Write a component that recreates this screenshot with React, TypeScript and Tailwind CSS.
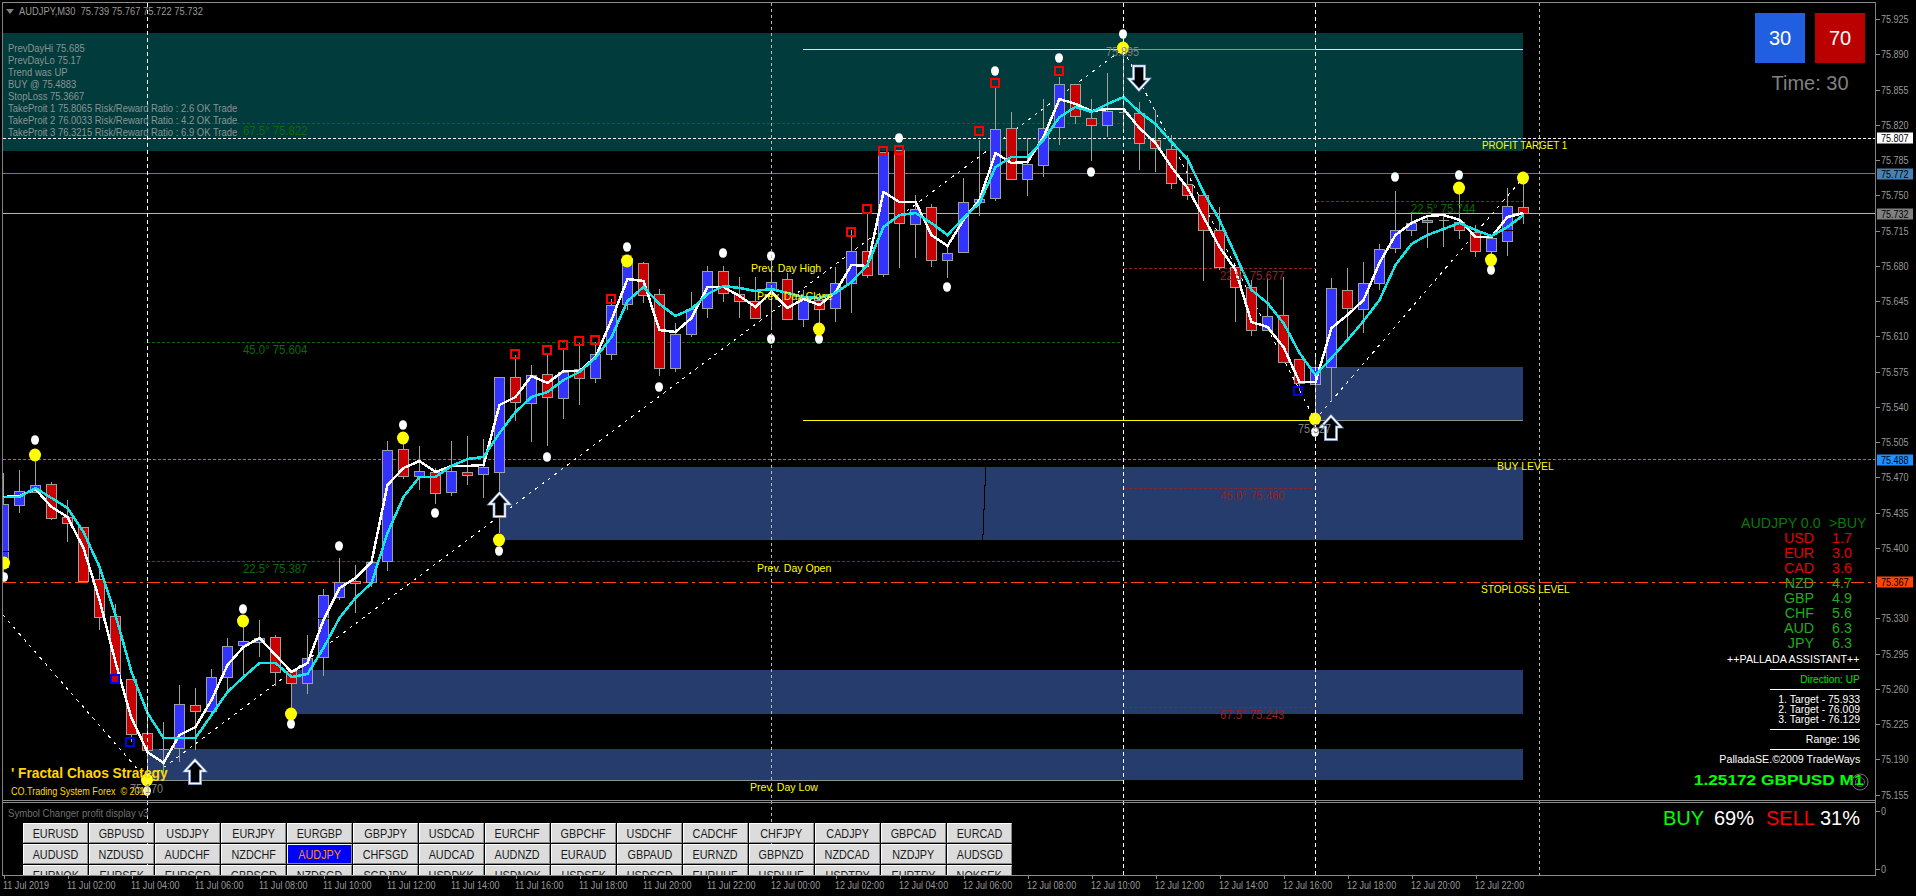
import React from "react";

const X = (k: number) => 3.5 + 16 * k;

type C = [string, number, number, number, number];
const candles: C[] = [
  ["b",504,567,473,580],["b",491,505,470,513],["b",485,492,460,492],["r",484,518,482,520],["r",517,523,500,542],
  ["r",527,581,527,581],["r",579,617,563,630],["r",616,683,604,683],["r",679,734,679,742],["r",733,750,700,790],
  ["d",749,749,722,773],["b",704,748,685,762],["r",705,711,688,750],["b",677,711,669,717],["b",646,677,638,692],
  ["b",641,645,615,678],["b",638,642,620,657],["r",637,672,635,686],["r",671,683,671,710],["b",658,683,635,694],
  ["b",595,657,589,676],["b",582,597,558,600],["r",581,583,565,613],["b",562,582,559,587],["b",450,561,441,571],
  ["r",449,476,443,479],["b",471,476,446,490],["r",472,493,468,504],["b",471,492,441,496],["r",472,475,436,485],
  ["b",467,474,439,498],["b",377,472,377,533],["r",377,402,355,421],["b",375,403,365,442],["r",374,397,355,446],
  ["b",372,398,350,419],["r",369,378,343,405],["b",354,378,342,383],["b",305,354,299,360],["b",258,304,255,310],
  ["r",263,295,262,303],["r",294,368,289,376],["b",334,368,323,372],["b",309,334,292,337],["b",271,308,266,318],
  ["r",271,293,266,302],["r",294,301,277,318],["r",301,318,277,318],["b",282,290,263,328],["r",279,319,273,319],
  ["b",298,319,290,327],["r",300,309,293,323],["b",283,308,267,322],["b",251,283,230,313],["r",251,275,214,278],
  ["b",152,274,152,277],["r",150,223,150,268],["b",209,224,195,258],["r",207,260,204,267],["b",253,260,245,278],
  ["b",202,252,178,252],["b",199,202,140,216],["b",129,198,88,201],["r",128,179,112,179],["b",164,179,138,196],
  ["b",128,165,99,177],["b",84,127,77,145],["r",84,116,84,124],["r",118,125,99,161],["b",111,125,73,137],
  ["d",112,112,50,133],["r",113,143,102,170],["r",140,148,110,172],["r",149,183,135,189],["r",184,195,155,200],
  ["r",195,230,195,281],["r",230,267,207,270],["r",267,287,267,322],["r",287,330,280,336],["b",316,330,278,330],
  ["r",315,362,277,362],["r",359,383,359,391],["b",367,384,357,420],["b",288,367,278,402],["r",290,308,268,338],
  ["b",283,309,262,333],["b",249,283,244,290],["b",230,248,191,253],["b",223,230,212,236],["b",220,222,215,248],
  ["d",220,220,215,247],["r",222,230,192,239],["r",232,251,225,257],["b",238,251,238,255],["b",206,241,188,256],
  ["r",207,213,183,224],
];

const whiteMA = [497,496,489,507,517,548,600,662,718,752,763,735,727,700,665,647,638,655,672,663,620,588,578,562,485,468,461,472,466,466,465,405,397,376,383,371,371,357,320,279,281,330,332,318,287,287,296,307,292,308,299,305,292,265,266,192,202,202,235,246,220,200,153,163,162,137,99,104,111,109,109,128,143,167,188,217,247,270,322,327,347,382,382,328,315,300,263,235,223,216,215,220,237,237,217,213];
const cyanMA = [497,497,488,498,508,532,567,615,672,713,738,738,738,715,692,677,663,663,677,674,648,618,598,583,533,497,477,477,466,459,457,433,412,397,392,380,372,358,337,301,287,304,316,309,294,286,288,291,289,293,297,298,293,282,265,227,215,213,223,235,218,203,167,157,157,140,117,107,112,104,97,112,124,142,159,192,220,255,290,303,323,353,375,358,340,321,300,265,244,235,229,223,230,236,227,215];
const pts = (a: number[]) => a.map((y, k) => `${X(k)},${y}`).join(" ");

const yellowDots = [[4,563],[35,455],[147,780],[243,621],[291,714],[403,438],[499,540],[627,261],[819,329],[1123,48],[1315,419],[1459,188],[1491,260],[1523,178]];
const whiteDots = [[4,577],[35,440],[147,791],[243,609],[291,724],[339,546],[403,425],[435,513],[499,551],[547,457],[627,247],[659,387],[723,253],[771,256],[771,339],[819,339],[899,138],[947,287],[995,71],[1059,58],[1091,172],[1123,34],[1315,432],[1395,177],[1459,175],[1491,270]];
const redSquares = [[515,354],[547,350],[563,345],[579,341],[595,340],[611,299],[627,260],[851,232],[867,209],[883,151],[899,150],[979,131],[995,83],[1059,71]];
const blueSquares = [[115,679],[130,742],[1298,391]];

const upArrows = [[195,759],[499.5,492],[1331,415]];

const zones = [
  [1316,367,207,53],
  [500,467,1023,73],
  [292,670,1231,44],
  [147,749,1376,31],
];

const info = [
  "PrevDayHi 75.685",
  "PrevDayLo 75.17",
  "Trend was UP",
  "BUY @ 75.4883",
  "StopLoss 75.3667",
  "TakeProit 1 75.8065 Risk/Reward Ratio : 2.6 OK Trade",
  "TakeProit 2 76.0033 Risk/Reward Ratio : 4.2 OK Trade",
  "TakeProit 3 76.3215 Risk/Reward Ratio : 6.9 OK Trade",
];

type L = { t: string; x: number; y: number; c: string };
const labels: L[] = [
  { t: "AUDJPY,M30\u00a0\u00a075.739 75.767 75.722 75.732", x: 19, y: 11, c: "text-[11px] scale-x-[.85] text-[#999999]" },
  ...info.map((t, i) => ({ t, x: 7.5, y: 47.7 + 12 * i, c: "text-[11px] scale-x-[.86] text-[#8a9494]" })),
  { t: "67.5° 75.822", x: 242.5, y: 130, c: "text-[13px] scale-x-[.87] text-[#0a6a0a]" },
  { t: "45.0° 75.604", x: 242.5, y: 349, c: "text-[13px] scale-x-[.87] text-[#0a6a0a]" },
  { t: "22.5° 75.387", x: 242.5, y: 568, c: "text-[13px] scale-x-[.87] text-[#0a6a0a]" },
  { t: "22.5° 75.744", x: 1411, y: 208, c: "text-[13px] scale-x-[.87] text-[#0a6a0a]" },
  { t: "22.5° 75.677", x: 1219.5, y: 275, c: "text-[13px] scale-x-[.87] text-[#952020]" },
  { t: "45.0° 75.460", x: 1219.5, y: 495, c: "text-[13px] scale-x-[.87] text-[#952020]" },
  { t: "67.5° 75.243", x: 1219.5, y: 714, c: "text-[13px] scale-x-[.87] text-[#952020]" },
  { t: "Prev. Day High", x: 751, y: 268, c: "text-[11px] scale-x-[.96] text-[#ffff00]" },
  { t: "Prev. Day Close", x: 757, y: 296, c: "text-[11px] scale-x-[.96] text-[#ffff00]" },
  { t: "Prev. Day Open", x: 757, y: 568, c: "text-[11px] scale-x-[.96] text-[#ffff00]" },
  { t: "Prev. Day Low", x: 750, y: 787, c: "text-[11px] scale-x-[.96] text-[#ffff00]" },
  { t: "PROFIT TARGET 1", x: 1481.5, y: 145, c: "text-[11px] scale-x-[.89] text-[#ffff00]" },
  { t: "BUY LEVEL", x: 1496.5, y: 466, c: "text-[11px] scale-x-[.95] text-[#ffff00]" },
  { t: "STOPLOSS LEVEL", x: 1481, y: 589, c: "text-[11px] scale-x-[.92] text-[#ffff00]" },
  { t: "75.895", x: 1106, y: 52, c: "text-[12px] scale-x-[.9] text-[#808080]" },
  { t: "75.527", x: 1298, y: 429, c: "text-[12px] scale-x-[.9] text-[#808080]" },
  { t: "75.170", x: 130, y: 789, c: "text-[12px] scale-x-[.9] text-[#808080]" },
  { t: "' Fractal Chaos Strategy", x: 10.5, y: 772.5, c: "text-[14px] font-bold scale-x-[.98] text-[#ffd700]" },
  { t: "CO.Trading System Forex\u00a0\u00a0©\u00a02019", x: 10.5, y: 791, c: "text-[11px] scale-x-[.82] text-[#ffd700]" },
];

const prices = ["75.925","75.890","75.855","75.820","75.785","75.750","75.715","75.680","75.645","75.610","75.575","75.540","75.505","75.470","75.435","75.400","75.365","75.330","75.295","75.260","75.225","75.190","75.155"];

const badges = [
  { t: "75.807", y: 138, c: "bg-white text-black" },
  { t: "75.772", y: 173.5, c: "bg-[#4682b4] text-black" },
  { t: "75.732", y: 213.5, c: "bg-[#808080] text-black" },
  { t: "75.488", y: 459.5, c: "bg-[#1e90ff] text-black" },
  { t: "75.367", y: 582, c: "bg-[#ff4500] text-black" },
];

const buttons = [
  "EURUSD","GBPUSD","USDJPY","EURJPY","EURGBP","GBPJPY","USDCAD","EURCHF","GBPCHF","USDCHF","CADCHF","CHFJPY","CADJPY","GBPCAD","EURCAD",
  "AUDUSD","NZDUSD","AUDCHF","NZDCHF","AUDJPY","CHFSGD","AUDCAD","AUDNZD","EURAUD","GBPAUD","EURNZD","GBPNZD","NZDCAD","NZDJPY","AUDSGD",
  "EURNOK","EURSEK","EURSGD","GBPSGD","NZDSGD","SGDJPY","USDDKK","USDNOK","USDSEK","USDSGD","EURHUF","USDHUF","USDTRY","EURTRY","NOKSEK",
];

const times = [
  "11 Jul 2019","11 Jul 02:00","11 Jul 04:00","11 Jul 06:00","11 Jul 08:00","11 Jul 10:00","11 Jul 12:00","11 Jul 14:00","11 Jul 16:00","11 Jul 18:00","11 Jul 20:00","11 Jul 22:00",
  "12 Jul 00:00","12 Jul 02:00","12 Jul 04:00","12 Jul 06:00","12 Jul 08:00","12 Jul 10:00","12 Jul 12:00","12 Jul 14:00","12 Jul 16:00","12 Jul 18:00","12 Jul 20:00","12 Jul 22:00",
];

const strength = [
  ["USD","1.7","text-[#e80000]"],["EUR","3.0","text-[#e80000]"],["CAD","3.6","text-[#e80000]"],
  ["NZD","4.7","text-[#22aa22]"],["GBP","4.9","text-[#22aa22]"],["CHF","5.6","text-[#22aa22]"],
  ["AUD","6.3","text-[#22aa22]"],["JPY","6.3","text-[#22aa22]"],
];

function Chart() {
  return (
    <svg className="absolute left-0 top-0" width={1916} height={896} viewBox="0 0 1916 896">
      <defs>
        <clipPath id="chartClip"><rect x={3} y={3} width={1872} height={798} /></clipPath>
      </defs>
      <g clipPath="url(#chartClip)">
        <rect x={3} y={33} width={1520} height={118} fill="#013b3b" />
        {zones.map(([x, y, w, h]) => (
          <rect key={x} x={x} y={y} width={w} height={h} fill="#263c6c" />
        ))}
        <polyline points="985.5,467 985.5,485 984.5,485 984.5,509 983.5,509 983.5,534 982.5,534 982.5,540" fill="none" stroke="#000" strokeWidth={1} shapeRendering="crispEdges" />

        <g shapeRendering="crispEdges" strokeWidth={1} fill="none">
          <line x1={147} x2={1124} y1={123.5} y2={123.5} stroke="#0a6a0a" strokeDasharray="3 2" />
          <line x1={147} x2={1124} y1={342.5} y2={342.5} stroke="#0a6a0a" strokeDasharray="3 2" />
          <line x1={147} x2={1124} y1={561.5} y2={561.5} stroke="#0a6a0a" strokeDasharray="3 2" />
          <line x1={1316} x2={1524} y1={201.5} y2={201.5} stroke="#0a6a0a" strokeDasharray="3 2" />
          <line x1={1124} x2={1316} y1={268.5} y2={268.5} stroke="#952020" strokeDasharray="3 2" />
          <line x1={1124} x2={1316} y1={488.5} y2={488.5} stroke="#952020" strokeDasharray="3 2" />
          <line x1={1124} x2={1316} y1={707.5} y2={707.5} stroke="#952020" strokeDasharray="3 2" />
          <line x1={803} x2={1124} y1={49.5} y2={49.5} stroke="#ffff00" />
          <line x1={1124} x2={1316} y1={49.5} y2={49.5} stroke="#909090" />
          <line x1={1316} x2={1523} y1={49.5} y2={49.5} stroke="#ffff00" />
          <line x1={803} x2={1316} y1={420.5} y2={420.5} stroke="#ffff00" />
          <line x1={1316} x2={1523} y1={420.5} y2={420.5} stroke="#909090" />
          <line x1={147} x2={1124} y1={780.5} y2={780.5} stroke="#909090" />
          <line x1={3} x2={1875} y1={138.5} y2={138.5} stroke="#ffffff" strokeDasharray="3 2" />
          <line x1={3} x2={1875} y1={173.5} y2={173.5} stroke="#4682b4" />
          <line x1={3} x2={1875} y1={213.5} y2={213.5} stroke="#b4b4b4" />
          <line x1={3} x2={1875} y1={459.5} y2={459.5} stroke="#1e90ff" strokeDasharray="3 2" />
          <line x1={3} x2={1875} y1={582.5} y2={582.5} stroke="#ff4500" strokeDasharray="13 4 3 4" />
        </g>

        <polyline points="3,615 147,780 1123,49 1315,420 1523,178" fill="none" stroke="#ffffff" strokeWidth={1} strokeDasharray="3 5" shapeRendering="crispEdges" />

        <g shapeRendering="crispEdges">
          {candles.map(([c, top, bot, wt, wb], k) => (
            <g key={k}>
              <line x1={X(k)} x2={X(k)} y1={wt} y2={wb} stroke="#a0a0a0" strokeWidth={1} />
              {c === "d" ? (
                <line x1={X(k) - 5} x2={X(k) + 5} y1={top + 0.5} y2={top + 0.5} stroke="#a0a0a0" strokeWidth={1} />
              ) : (
                <rect x={X(k) - 5} y={top + 0.5} width={10} height={bot - top} fill={c === "b" ? "#3333ff" : "#c80000"} stroke="#a0a0a0" strokeWidth={1} />
              )}
            </g>
          ))}
          <line x1={3} x2={9} y1={551.5} y2={551.5} stroke="#000" />
          <line x1={318} x2={329} y1={618.5} y2={618.5} stroke="#000" />
          <line x1={1499} x2={1513} y1={230.5} y2={230.5} stroke="#000" />
        </g>

        <polyline points={pts(whiteMA)} fill="none" stroke="#ffffff" strokeWidth={2.5} shapeRendering="crispEdges" />
        <polyline points={pts(cyanMA)} fill="none" stroke="#12e6e6" strokeWidth={2.5} shapeRendering="crispEdges" />

        <g shapeRendering="crispEdges" fill="none" strokeWidth={2}>
          {redSquares.map(([x, y]) => (
            <rect key={`${x}-${y}`} x={x - 4} y={y - 4} width={8} height={8} stroke="#ff0000" />
          ))}
          {blueSquares.map(([x, y]) => (
            <rect key={`${x}-${y}`} x={x - 4} y={y - 4} width={8} height={8} stroke="#0000f0" />
          ))}
        </g>

        {whiteDots.map(([x, y]) => (
          <ellipse key={`${x}-${y}`} cx={x} cy={y} rx={4} ry={4.8} fill="#ffffff" />
        ))}
        {yellowDots.map(([x, y]) => (
          <ellipse key={`${x}-${y}`} cx={x} cy={y} rx={6} ry={6.4} fill="#ffff00" />
        ))}

        {upArrows.map(([x, y]) => (
          <g key={x}>
            <path
              d={`M${x} ${y + 1}L${x + 10} ${y + 12}H${x + 5.5}V${y + 24.5}H${x - 5.5}V${y + 12}H${x - 10}Z`}
              fill="#000"
              stroke="#5577aa"
              strokeWidth={3}
            />
            <path
              d={`M${x} ${y + 1}L${x + 10} ${y + 12}H${x + 5.5}V${y + 24.5}H${x - 5.5}V${y + 12}H${x - 10}Z`}
              fill="none"
              stroke="#ffffff"
              strokeWidth={1.6}
            />
          </g>
        ))}
        <path d="M1139 90L1149 79H1144.5V66H1133.5V79H1129Z" fill="#000" stroke="#5577aa" strokeWidth={3} />
        <path d="M1139 90L1149 79H1144.5V66H1133.5V79H1129Z" fill="none" stroke="#ffffff" strokeWidth={1.6} />
      </g>

      <g shapeRendering="crispEdges" strokeWidth={1}>
        <line x1={147.5} x2={147.5} y1={3} y2={875} stroke="#ffffff" strokeDasharray="4 3" />
        <line x1={1123.5} x2={1123.5} y1={3} y2={875} stroke="#ffffff" strokeDasharray="4 3" />
        <line x1={1315.5} x2={1315.5} y1={3} y2={875} stroke="#ffffff" strokeDasharray="4 3" />
        <line x1={771.5} x2={771.5} y1={3} y2={875} stroke="#b8b8b8" strokeDasharray="3 3" />
        <line x1={1539.5} x2={1539.5} y1={3} y2={875} stroke="#b8b8b8" strokeDasharray="3 3" />
      </g>
    </svg>
  );
}

export default function App() {
  return (
    <div className="relative w-[1916px] h-[896px] overflow-hidden bg-black font-['Liberation_Sans',sans-serif]">
      <Chart />

      {/* labels placed on the chart canvas */}
      {labels.map((l) => (
        <div
          key={l.t}
          className={`absolute whitespace-nowrap origin-left -translate-y-1/2 leading-none ${l.c}`}
          style={{ left: l.x, top: l.y }}
        >
          {l.t}
        </div>
      ))}
      <svg className="absolute left-[5.5px] top-[9px]" width={8} height={5} viewBox="0 0 8 5">
        <path d="M0 0H8L4 5Z" fill="#808080" />
      </svg>

      {/* window shell */}
      <div className="absolute left-0 top-0 w-full h-full flex flex-col pl-[2px] pt-[2px]">
        <div className="flex h-[873px] shrink-0">
          <div className="flex flex-col w-[1874px] border-l border-r border-[#808080]">
            <div className="h-[799px] shrink-0 border-t border-b border-[#8c8c8c]" />
            <div className="relative flex-1 min-h-0 border-t border-[#8c8c8c] mt-[1px] overflow-hidden">
              <div className="h-[20px] flex items-center pl-[4.5px] text-[11px] text-[#707070]">
                <span className="whitespace-nowrap origin-left scale-x-[.87] leading-none">Symbol Changer profit display v3</span>
              </div>
              <div className="grid grid-cols-[repeat(15,65px)] auto-rows-[20px] gap-[1px] pl-[20px]">
                {buttons.map((b) => {
                  const active = b === "AUDJPY";
                  return (
                    <div
                      key={b}
                      className={
                        active
                          ? "flex items-center justify-center border border-t-white border-l-white border-r-[#888888] border-b-[#888888] bg-[#0000ff] text-[#ff8c00] text-[13px]"
                          : "flex items-center justify-center border border-t-white border-l-white border-r-[#888888] border-b-[#888888] bg-[#dcdcdc] text-[#1a1a1a] text-[13px]"
                      }
                    >
                      <span className="scale-x-[.83] leading-none">{b}</span>
                    </div>
                  );
                })}
              </div>
              <div className="absolute right-[15px] top-[4px] flex items-center text-[20px] leading-[22px] whitespace-nowrap">
                <span className="text-[#00ff00] mr-[10px]">BUY</span>
                <span className="text-white mr-[12px]">69%</span>
                <span className="text-[#ff0000] mr-[5px]">SELL</span>
                <span className="text-white">31%</span>
              </div>
            </div>
          </div>

          {/* price axis */}
          <div className="relative flex-1 flex flex-col text-[11px] text-[#999999]">
            <div className="h-[799px] shrink-0 flex flex-col">
              {prices.map((p) => (
                <div key={p} className="h-[35.26px] shrink-0 flex items-center">
                  <div className="w-[4px] h-[1px] bg-[#8c8c8c]" />
                  <span className="ml-[1px] origin-left scale-x-[.82] leading-none">{p}</span>
                </div>
              ))}
            </div>
            <div className="flex flex-col pt-[1px]">
              <div className="h-[58px] flex items-center -mt-[20px]">
                <div className="w-[4px] h-[1px] bg-[#8c8c8c]" />
                <span className="ml-[1px] origin-left scale-x-[.82] leading-none">0</span>
              </div>
              <div className="h-[58px] flex items-center">
                <div className="w-[4px] h-[1px] bg-[#8c8c8c]" />
                <span className="ml-[1px] origin-left scale-x-[.82] leading-none">0</span>
              </div>
            </div>
          </div>
        </div>

        {/* time axis */}
        <div className="flex pl-[1.5px] border-t border-[#8c8c8c] w-[1874px] text-[11px] text-[#999999]">
          {times.map((t) => (
            <div key={t} className="w-[64px] shrink-0 flex flex-col">
              <div className="w-[1px] h-[3px] bg-[#8c8c8c]" />
              <span className="whitespace-nowrap origin-left scale-x-[.82] leading-none mt-[1px] -ml-[1px]">{t}</span>
            </div>
          ))}
        </div>
      </div>

      {/* price badges */}
      {badges.map((b) => (
        <div
          key={b.t}
          className={`absolute left-[1877px] w-[36px] h-[11px] -translate-y-1/2 flex items-center pl-[4px] text-[11px] ${b.c}`}
          style={{ top: b.y }}
        >
          <span className="origin-left scale-x-[.82] leading-none">{b.t}</span>
        </div>
      ))}

      {/* 30 / 70 panel */}
      <div className="absolute left-[1755px] top-[13px] flex flex-col items-center w-[110px]">
        <div className="flex gap-[10px] text-[20px] text-white">
          <div className="w-[50px] h-[50px] flex items-center justify-center bg-[#2060e0]">30</div>
          <div className="w-[50px] h-[50px] flex items-center justify-center bg-[#bb0000]">70</div>
        </div>
        <div className="mt-[9px] text-[20px] leading-[22px] text-[#808080]">Time: 30</div>
      </div>

      {/* currency strength + assistant panel */}
      <div className="absolute left-[1660px] top-[515px] w-[200px] flex flex-col items-end">
        <div className="w-full h-[15px] flex items-center text-[15px] leading-none text-[#0a7a0a] whitespace-nowrap">
          <span className="shrink-0 w-[160.7px] text-right origin-right scale-x-[.95]">AUDJPY 0.0</span>
          <span className="shrink-0 ml-[8.3px] origin-left scale-x-[.95]">&gt;BUY</span>
        </div>
        {strength.map(([c, v, cls]) => (
          <div key={c} className={`w-full h-[15px] flex items-center text-[15px] leading-none ${cls}`}>
            <span className="shrink-0 w-[154px] text-right origin-right scale-x-[.95]">{c}</span>
            <span className="shrink-0 ml-[17.7px] origin-left scale-x-[.95]">{v}</span>
          </div>
        ))}
        <div className="mt-[4px] flex flex-col items-end text-[11px] leading-none text-white whitespace-nowrap">
          <div className="h-[10px] flex items-center origin-right scale-x-[.97]">++PALLADA ASSISTANT++</div>
          <div className="h-[10px] flex items-center"><div className="w-[90px] h-[1px] bg-white" /></div>
          <div className="h-[10px] flex items-center text-[#00e000] origin-right scale-x-[.92]">Direction: UP</div>
          <div className="h-[10px] flex items-center"><div className="w-[90px] h-[1px] bg-white" /></div>
          <div className="h-[10px] flex items-center origin-right scale-x-[.95]">1. Target - 75.933</div>
          <div className="h-[10px] flex items-center origin-right scale-x-[.95]">2. Target - 76.009</div>
          <div className="h-[10px] flex items-center origin-right scale-x-[.95]">3. Target - 76.129</div>
          <div className="h-[10px] flex items-center"><div className="w-[90px] h-[1px] bg-white" /></div>
          <div className="h-[10px] flex items-center origin-right scale-x-[.95]">Range: 196</div>
          <div className="h-[10px] flex items-center"><div className="w-[90px] h-[1px] bg-white" /></div>
          <div className="h-[10px] flex items-center origin-right scale-x-[.97]">PalladaSE.©2009 TradeWays</div>
        </div>
      </div>
      <div className="absolute right-[52px] top-[771px] text-[15px] leading-[18px] font-bold text-[#00ff00] whitespace-nowrap origin-right scale-x-[1.15]">
        1.25172 GBPUSD M1
      </div>
      <svg className="absolute left-[1851px] top-[773px]" width={18} height={18} viewBox="0 0 18 18">
        <circle cx={9} cy={9} r={8} fill="none" stroke="#707070" strokeWidth={1} />
        <circle cx={9} cy={9} r={4.5} fill="none" stroke="#606060" strokeWidth={1} />
      </svg>
    </div>
  );
}
